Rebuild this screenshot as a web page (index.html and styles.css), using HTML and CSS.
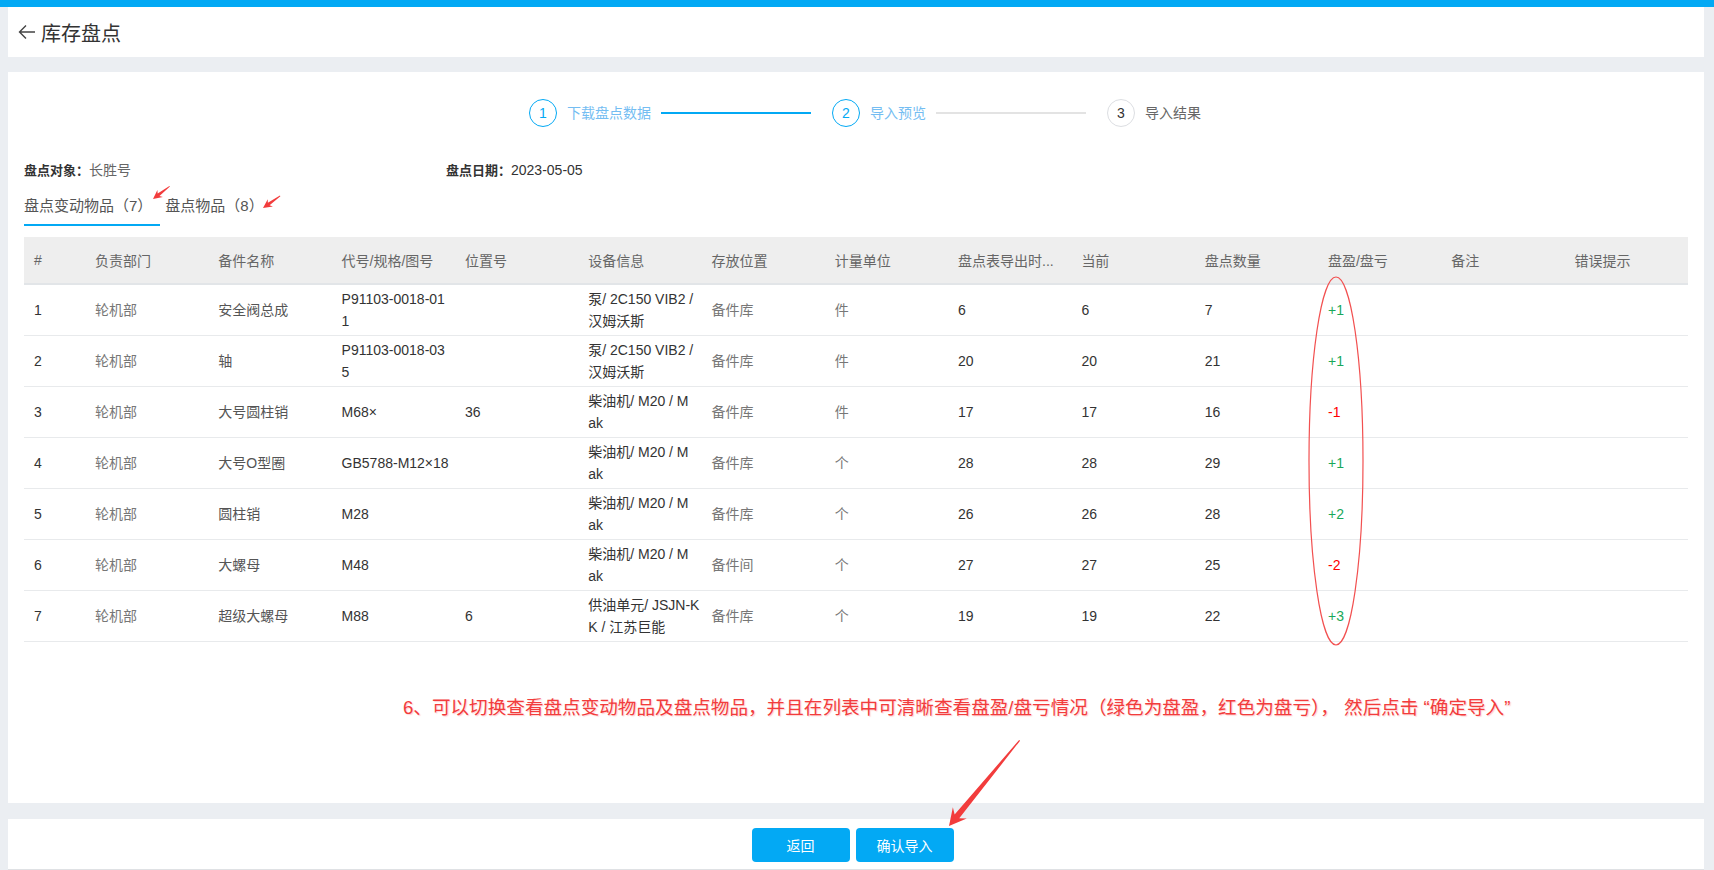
FILE: index.html
```html
<!DOCTYPE html>
<html lang="zh-CN">
<head>
<meta charset="utf-8">
<title>库存盘点</title>
<link rel="stylesheet" href="styles.css">
</head>
<body>
<div class="topbar"></div>
<div class="page">
  <header class="head">
    <svg class="back" viewBox="0 0 18 18" width="18" height="18"><path d="M17 9H1.5M8 2.5L1.5 9 8 15.5" fill="none" stroke="#444" stroke-width="1.4"/></svg>
    <span class="title">库存盘点</span>
  </header>
  <main class="content">
    <div class="steps">
      <div class="step done"><span class="num">1</span><span class="label">下载盘点数据</span><span class="bar on"></span></div>
      <div class="step done"><span class="num">2</span><span class="label">导入预览</span><span class="bar"></span></div>
      <div class="step"><span class="num">3</span><span class="label">导入结果</span></div>
    </div>
    <div class="info">
      <div class="info-item first"><b>盘点对象：</b><span class="muted">长胜号</span></div>
      <div class="info-item"><b>盘点日期：</b><span>2023-05-05</span></div>
    </div>
    <div class="tabs">
      <div class="tab active">盘点变动物品（7）</div>
      <div class="tab">盘点物品（8）</div>
    </div>
    <table class="grid">
      <colgroup><col class="c-idx"><col><col><col><col><col><col><col><col><col><col><col><col><col></colgroup>
      <thead>
        <tr><th>#</th><th>负责部门</th><th>备件名称</th><th>代号/规格/图号</th><th>位置号</th><th>设备信息</th><th>存放位置</th><th>计量单位</th><th>盘点表导出时...</th><th>当前</th><th>盘点数量</th><th>盘盈/盘亏</th><th>备注</th><th>错误提示</th></tr>
      </thead>
      <tbody>
        <tr><td>1</td><td class="soft">轮机部</td><td class="cn">安全阀总成</td><td class="two">P91103-0018-01<br>1</td><td></td><td class="two">泵/ 2C150 VIB2 /<br>汉姆沃斯</td><td class="soft">备件库</td><td class="soft">件</td><td>6</td><td>6</td><td>7</td><td class="up">+1</td><td></td><td></td></tr>
        <tr><td>2</td><td class="soft">轮机部</td><td class="cn">轴</td><td class="two">P91103-0018-03<br>5</td><td></td><td class="two">泵/ 2C150 VIB2 /<br>汉姆沃斯</td><td class="soft">备件库</td><td class="soft">件</td><td>20</td><td>20</td><td>21</td><td class="up">+1</td><td></td><td></td></tr>
        <tr><td>3</td><td class="soft">轮机部</td><td class="cn">大号圆柱销</td><td>M68×</td><td>36</td><td class="two">柴油机/ M20 / M<br>ak</td><td class="soft">备件库</td><td class="soft">件</td><td>17</td><td>17</td><td>16</td><td class="down">-1</td><td></td><td></td></tr>
        <tr><td>4</td><td class="soft">轮机部</td><td class="cn">大号O型圈</td><td class="two">GB5788-M12×18</td><td></td><td class="two">柴油机/ M20 / M<br>ak</td><td class="soft">备件库</td><td class="soft">个</td><td>28</td><td>28</td><td>29</td><td class="up">+1</td><td></td><td></td></tr>
        <tr><td>5</td><td class="soft">轮机部</td><td class="cn">圆柱销</td><td>M28</td><td></td><td class="two">柴油机/ M20 / M<br>ak</td><td class="soft">备件库</td><td class="soft">个</td><td>26</td><td>26</td><td>28</td><td class="up">+2</td><td></td><td></td></tr>
        <tr><td>6</td><td class="soft">轮机部</td><td class="cn">大螺母</td><td>M48</td><td></td><td class="two">柴油机/ M20 / M<br>ak</td><td class="soft">备件间</td><td class="soft">个</td><td>27</td><td>27</td><td>25</td><td class="down">-2</td><td></td><td></td></tr>
        <tr><td>7</td><td class="soft">轮机部</td><td class="cn">超级大螺母</td><td>M88</td><td>6</td><td class="two">供油单元/ JSJN-K<br>K / 江苏巨能</td><td class="soft">备件库</td><td class="soft">个</td><td>19</td><td>19</td><td>22</td><td class="up">+3</td><td></td><td></td></tr>
      </tbody>
    </table>
  </main>
  <footer class="foot">
    <button class="btn">返回</button>
    <button class="btn">确认导入</button>
  </footer>
</div>
<div class="note">6、可以切换查看盘点变动物品及盘点物品，并且在列表中可清晰查看盘盈/盘亏情况（绿色为盘盈，红色为盘亏）， 然后点击 “确定导入”</div>
<svg class="marks" width="1714" height="870" viewBox="0 0 1714 870">
  <ellipse cx="1336" cy="461" rx="27" ry="184" fill="none" stroke="#f25050" stroke-width="1.2"/>
  <path transform="translate(153 199) rotate(142.6)" d="M0 0 L-9 -4.5 L-7 -1.5 L-21 -0.4 L-21 0.4 L-7 1.5 L-9 4.5 Z" fill="#f23c3c"/>
  <path transform="translate(263 208) rotate(144.8)" d="M0 0 L-9 -4.5 L-7 -1.5 L-21 -0.4 L-21 0.4 L-7 1.5 L-9 4.5 Z" fill="#f23c3c"/>
  <path transform="translate(949 826) rotate(129.5)" d="M0 0 L-17 -9 L-12.5 -3 L-111 -0.6 L-111 0.6 L-12.5 3 L-17 9 Z" fill="#f23c3c"/>
</svg>
</body>
</html>
```
FILE: styles.css
```css
* { box-sizing: border-box; margin: 0; padding: 0; }
html, body { width: 1714px; height: 870px; overflow: hidden; }
body {
  position: relative;
  background: #ebeef2;
  font-family: "Liberation Sans", "Noto Sans CJK SC", sans-serif;
  font-size: 14px;
  color: #333;
}
.topbar { height: 7px; background: #03a9f4; }
.page { display: flex; flex-direction: column; padding: 0 10px 0 8px; }
.head {
  height: 50px;
  background: #fff;
  display: flex;
  align-items: center;
  gap: 5px;
  padding-left: 10px;
}
.back { display: block; }
.title { font-size: 20px; color: #333; }

.content {
  margin-top: 15px;
  height: 731px;
  background: #fff;
  padding: 27px 16px 0;
}
.steps { display: flex; justify-content: center; align-items: center; padding-left: 18px; }
.step { display: flex; align-items: center; gap: 10px; }
.num {
  width: 28px; height: 28px;
  border-radius: 50%;
  border: 1px solid #dcdee2;
  display: flex; align-items: center; justify-content: center;
  font-size: 14px; color: #333;
}
.label { font-size: 14px; color: #666; line-height: 20px; }
.step.done .num { border-color: #03a9f4; color: #03a9f4; }
.step.done .label { color: #74bdf2; }
.bar { width: 150px; height: 2px; background: #e3e3e3; margin-right: 21px; }
.bar.on { background: #03a9f4; }

.info { display: flex; margin-top: 33px; line-height: 20px; }
.info-item { font-size: 14px; color: #333; }
.info-item.first { width: 422px; }
.info-item b { font-size: 13px; }
.muted { color: #666; }

.tabs { display: flex; margin-top: 14px; }
.tab {
  font-size: 15px;
  line-height: 22px;
  color: #555;
  padding-bottom: 7px;
  border-bottom: 2px solid transparent;
}
.tab.active { border-bottom-color: #03a9f4; padding-right: 8px; margin-right: 5px; }

.grid {
  margin-top: 11px;
  width: 1664px;
  table-layout: fixed;
  border-collapse: separate;
  border-spacing: 0;
}
.c-idx { width: 61px; }
.grid th, .grid td {
  text-align: left;
  font-weight: normal;
  padding: 0 8px 0 10px;
  vertical-align: middle;
}
.grid th {
  height: 48px;
  background: #eeeeee;
  border-bottom: 2px solid #e2e5e8;
  color: #666;
  white-space: nowrap;
}
.grid td {
  height: 51px;
  border-bottom: 1px solid #e8eaec;
  line-height: 22px;
  color: #333;
}
.grid td.soft { color: #777; }
.grid td.cn { color: #555; }
.grid td.two { white-space: nowrap; }
.grid td.up { color: #19a85a; }
.grid td.down { color: #f00; }

.foot {
  margin-top: 16px;
  height: 51px;
  background: #fff;
  border-bottom: 1px solid #dfe1e4;
  display: flex;
  justify-content: center;
  align-items: flex-start;
  gap: 6px;
  padding-top: 9px;
  padding-right: 7px;
}
.btn {
  width: 98px;
  height: 34px;
  border: none;
  border-radius: 4px;
  background: #03a9f4;
  color: #fff;
  font-family: "Liberation Sans", "Noto Sans CJK SC", sans-serif;
  font-size: 14px;
}

.note {
  position: absolute;
  left: 403px;
  top: 695px;
  font-size: 18.6px;
  line-height: 26px;
  color: #f23c3c;
  white-space: nowrap;
  text-shadow: 1px 1px 1px rgba(255, 120, 120, 0.35);
}
.marks { position: absolute; left: 0; top: 0; pointer-events: none; }
```
